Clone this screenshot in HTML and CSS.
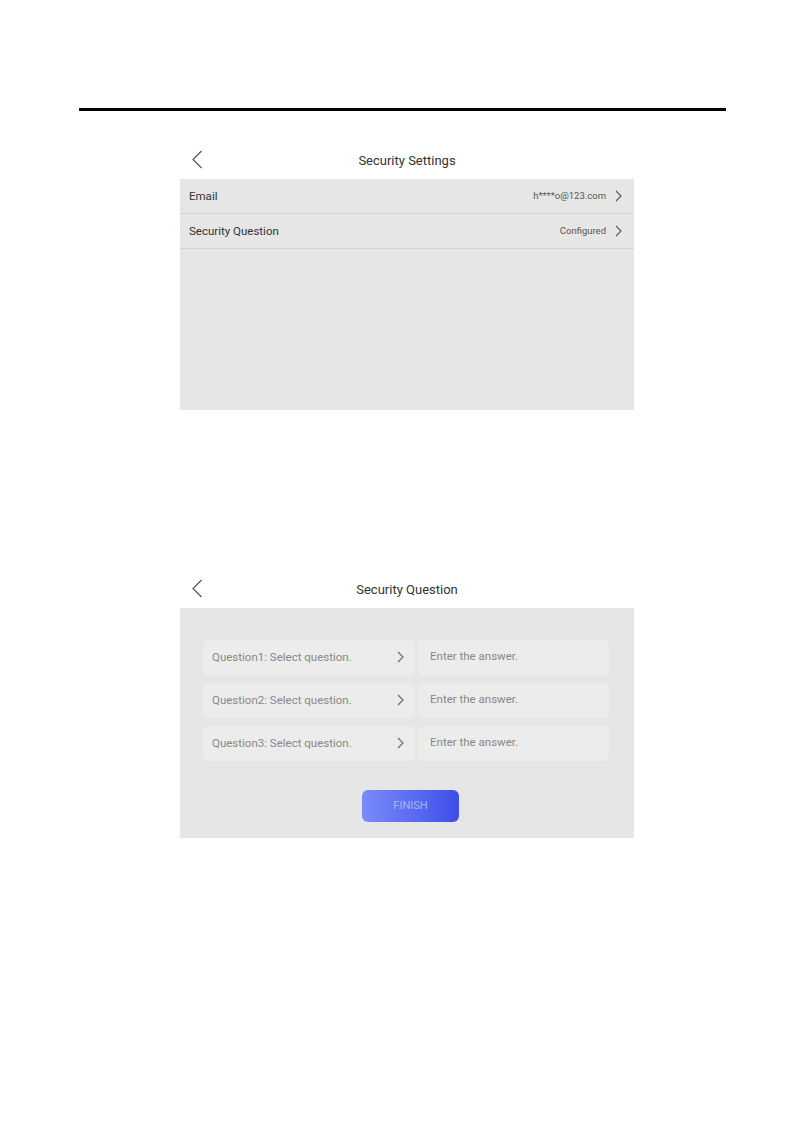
FILE: index.html
```html
<!DOCTYPE html>
<html lang="en">
<head>
  <meta charset="UTF-8" />
  <meta name="viewport" content="width=device-width, initial-scale=1.0" />
  <title>Security Settings</title>
  <link rel="stylesheet" href="styles.css">
</head>
<body>
  <div class="rule"></div>

  <div class="screen first">
    <div class="header">
      <svg class="back" width="12" height="19" viewBox="0 0 12 19"><path d="M10.5 1 L2 9.5 L10.5 18" fill="none" stroke="#555" stroke-width="1.2"/></svg>
      <span class="title">Security Settings</span>
    </div>
    <div class="panel list">
      <div class="row">
        <span class="label">Email</span>
        <span class="value">h****o@123.com</span>
        <svg class="arrow" width="7" height="12" viewBox="0 0 7 12"><path d="M1 1 L6 6 L1 11" fill="none" stroke="#555" stroke-width="1.1"/></svg>
      </div>
      <div class="row">
        <span class="label">Security Question</span>
        <span class="value">Configured</span>
        <svg class="arrow" width="7" height="12" viewBox="0 0 7 12"><path d="M1 1 L6 6 L1 11" fill="none" stroke="#555" stroke-width="1.1"/></svg>
      </div>
    </div>
  </div>

  <div class="screen second">
    <div class="header">
      <svg class="back" width="12" height="19" viewBox="0 0 12 19"><path d="M10.5 1 L2 9.5 L10.5 18" fill="none" stroke="#555" stroke-width="1.2"/></svg>
      <span class="title">Security Question</span>
    </div>
    <div class="panel form">
      <div class="qrow">
        <div class="card question">
          <span>Question1: Select question.</span>
          <svg width="7" height="12" viewBox="0 0 7 12"><path d="M1 1 L6 6 L1 11" fill="none" stroke="#666" stroke-width="1.1"/></svg>
        </div>
        <div class="card answer">Enter the answer.</div>
      </div>
      <div class="qrow">
        <div class="card question">
          <span>Question2: Select question.</span>
          <svg width="7" height="12" viewBox="0 0 7 12"><path d="M1 1 L6 6 L1 11" fill="none" stroke="#666" stroke-width="1.1"/></svg>
        </div>
        <div class="card answer">Enter the answer.</div>
      </div>
      <div class="qrow">
        <div class="card question">
          <span>Question3: Select question.</span>
          <svg width="7" height="12" viewBox="0 0 7 12"><path d="M1 1 L6 6 L1 11" fill="none" stroke="#666" stroke-width="1.1"/></svg>
        </div>
        <div class="card answer">Enter the answer.</div>
      </div>
      <div class="actions">
        <button class="finish">FINISH</button>
      </div>
    </div>
  </div>
</body>
</html>
```

FILE: styles.css
```css
body {
  margin: 0;
  padding-top: 108px;
  font-family: Roboto, "Liberation Sans", sans-serif;
  background-color: #fff;
  color: #333;
}
.rule {
  margin-left: 79px;
  width: 647px;
  height: 2.5px;
  background-color: #000;
}
.screen {
  margin-left: 180px;
  width: 454px;
}
.screen.first {
  margin-top: 32px;
}
.screen.second {
  margin-top: 162px;
}
.header {
  position: relative;
  height: 36px;
  display: flex;
  align-items: center;
  justify-content: center;
}
.header .title {
  font-size: 13px;
  color: #333;
  padding-bottom: 1px;
}
.header .back {
  position: absolute;
  left: 11px;
  top: 7px;
}
.panel {
  background-color: #e6e6e6;
}
.list {
  height: 231px;
}
.row {
  display: flex;
  align-items: center;
  height: 34px;
  padding: 0 12px 0 9px;
  border-bottom: 1px solid #d4d4d4;
}
.row .label {
  flex: 1;
  font-size: 11.5px;
  color: #333;
  padding-top: 1px;
}
.row .value {
  font-size: 9.5px;
  color: #555;
  margin-right: 9px;
}
.form {
  height: 230px;
  box-sizing: border-box;
  padding: 32px 25px 0 23px;
  display: flex;
  flex-direction: column;
  gap: 8px;
}
.qrow {
  display: flex;
  gap: 3px;
  height: 35px;
}
.card {
  background-color: #ececec;
  border-radius: 5px;
  display: flex;
  align-items: center;
  font-size: 11.5px;
  color: #888;
}
.question {
  width: 212px;
  box-sizing: border-box;
  padding: 0 11px 0 9px;
  justify-content: space-between;
}
.answer {
  flex: 1;
  padding: 0 12px 3px;
}
.actions {
  display: flex;
  justify-content: center;
  padding-left: 9px;
  margin-top: 21px;
}
.finish {
  width: 97px;
  height: 32px;
  border: none;
  border-radius: 6px;
  background: linear-gradient(90deg, #7a8bfa, #3e4fea);
  color: #a9b5f6;
  font-family: inherit;
  font-size: 11px;
}
```
